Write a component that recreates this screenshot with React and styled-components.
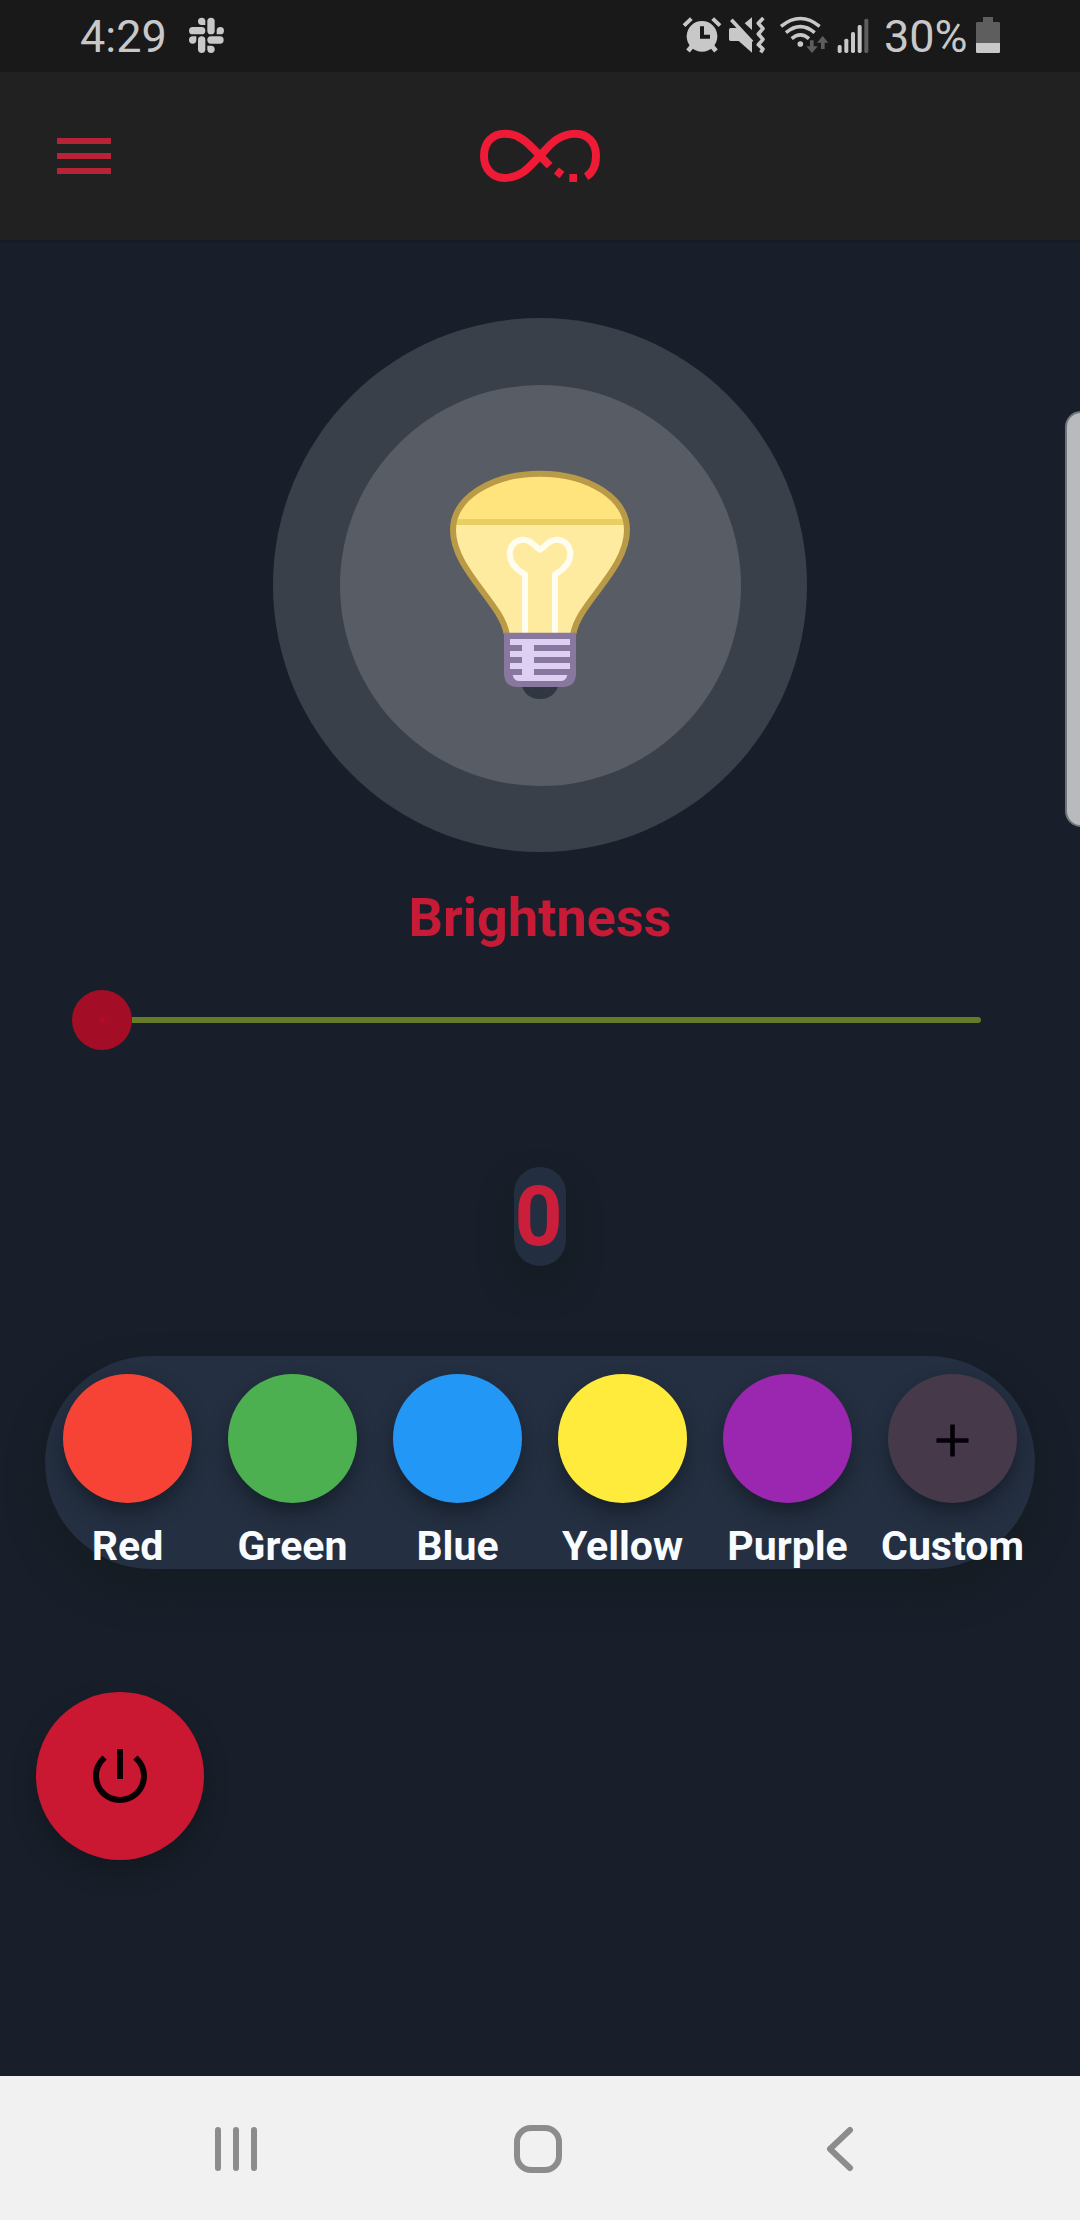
import React, { useState } from "react";
import styled, { createGlobalStyle } from "styled-components";

const GlobalStyle = createGlobalStyle`
  *, *::before, *::after { box-sizing: border-box; }
  body { margin: 0; background: #181f2a; }
`;

const Screen = styled.div`
  position: relative;
  display: flex;
  flex-direction: column;
  width: 1080px;
  height: 2220px;
  overflow: hidden;
  background: #181f2a;
  font-family: Roboto, "Liberation Sans", sans-serif;
`;

const StatusBar = styled.header`
  display: flex;
  justify-content: space-between;
  align-items: flex-start;
  height: 72px;
  padding: 16px 80px 0 80px;
  background: #191919;
`;

const StatusGroup = styled.div`
  display: flex;
  align-items: flex-start;
`;

const StatusText = styled.span`
  width: ${(p) => p.$width}px;
  margin: 0 ${(p) => p.$after}px 0 ${(p) => p.$before || 0}px;
  font-size: 45px;
  line-height: 42px;
  color: #c8c8c8;
  white-space: nowrap;
`;

const StatusIcon = styled.svg`
  display: block;
  width: ${(p) => p.$width}px;
  height: 38px;
  margin-right: ${(p) => p.$after || 0}px;
  fill: #c8c8c8;
  overflow: visible;
`;

const AppBar = styled.nav`
  z-index: 1;
  display: grid;
  grid-template-columns: 72px 1fr 72px;
  align-items: center;
  height: 168px;
  padding: 0 48px;
  background: #212121;
  box-shadow: 0 1px 3px rgba(0, 0, 0, 0.2);
`;

const IconButton = styled.button`
  display: flex;
  padding: 0;
  border: 0;
  background: none;
  color: #b92338;
`;

const MaterialIcon = styled.svg`
  display: block;
  width: ${(p) => p.$size}px;
  height: ${(p) => p.$size}px;
  fill: currentColor;
`;

const Logo = styled.svg`
  justify-self: center;
  display: block;
  width: 200px;
  height: 110px;
  margin-top: -2px;
`;

const Content = styled.main`
  flex: 1;
  display: flex;
  flex-direction: column;
  align-items: center;
  padding-top: 78px;
`;

const Halo = styled.div`
  display: flex;
  align-items: center;
  justify-content: center;
  width: 534px;
  height: 534px;
  border-radius: 50%;
  background: #3a4049;
`;

const HaloInner = styled.div`
  display: flex;
  align-items: center;
  justify-content: center;
  width: 401px;
  height: 401px;
  border-radius: 50%;
  background: #585c65;
`;

const BulbArt = styled.svg`
  display: block;
  width: 240px;
  height: 280px;
  margin-top: -10px;
`;

const Title = styled.h1`
  margin: 34px 0 0;
  font-size: 54px;
  line-height: 64px;
  font-weight: 700;
  color: #c71a36;
`;

const SliderRow = styled.div`
  align-self: stretch;
  display: flex;
  align-items: center;
  height: 60px;
  margin: 40px 99px 0 72px;
`;

const Thumb = styled.span`
  display: flex;
  align-items: center;
  justify-content: center;
  width: 60px;
  height: 60px;
  border-radius: 50%;
  background: #a30d25;

  &::after {
    content: "";
    width: 5px;
    height: 5px;
    border-radius: 50%;
    background: #b30d2c;
  }
`;

const Track = styled.span`
  flex: 1;
  height: 6px;
  border-radius: 0 3px 3px 0;
  background: #677a25;
`;

const Value = styled.output`
  width: 52px;
  height: 99px;
  margin-top: 117px;
  padding-right: 3px;
  border-radius: 26px;
  background: #232e40;
  box-shadow: 0 18px 30px 2px rgba(20, 28, 32, 0.8);
  font-size: 84px;
  line-height: 99px;
  font-weight: 700;
  text-align: center;
  color: #cb1e3a;
`;

const Palette = styled.section`
  display: grid;
  grid-template-columns: repeat(6, 165px);
  width: 990px;
  height: 213px;
  margin-top: 90px;
  padding-top: 18px;
  border-radius: 107px;
  background: #242f41;
  box-shadow: 0 20px 36px 0 #151c22;
`;

const Swatch = styled.div`
  display: flex;
  flex-direction: column;
  align-items: center;
`;

const SwatchButton = styled.button`
  display: flex;
  align-items: center;
  justify-content: center;
  width: 129px;
  height: 129px;
  padding: 3px 0 0;
  border: 0;
  border-radius: 50%;
  background: ${(p) => p.$color};
  color: #040008;
  box-shadow: 0 10px 20px -2px rgba(16, 24, 34, 0.75);
`;

const SwatchLabel = styled.span`
  margin-top: 19px;
  font-size: 41px;
  line-height: 49px;
  font-weight: 700;
  color: #f9fcff;
  white-space: nowrap;
`;

const PowerButton = styled.button`
  align-self: flex-start;
  display: flex;
  align-items: center;
  justify-content: center;
  width: 168px;
  height: 168px;
  margin: 123px 0 0 36px;
  padding: 0;
  border: 0;
  border-radius: 50%;
  background: #cb1832;
  color: #0a0003;
  box-shadow: 0 12px 22px rgba(18, 24, 30, 0.85);
`;

const EdgeHandle = styled.div`
  position: absolute;
  top: 411px;
  right: -3px;
  width: 18px;
  height: 416px;
  border: 2px solid #71757b;
  border-radius: 16px 0 0 16px;
  background: #b9babd;
`;

const SystemNav = styled.footer`
  display: grid;
  grid-template-columns: 42px 48px 28px;
  column-gap: 257px;
  align-items: center;
  height: 144px;
  padding: 1px 0 0 215px;
  background: #f1f1f1;
`;

const NavGlyph = styled.svg`
  display: block;
  width: ${(p) => p.$width}px;
  height: 48px;
  margin-left: ${(p) => p.$nudge || 0}px;
  fill: none;
  stroke: #8c8c8c;
  stroke-width: 6px;
  stroke-linecap: round;
  stroke-linejoin: round;
`;

function SlackIcon() {
  return (
    <StatusIcon $width={36} viewBox="564 48 108 114">
      <rect x="622" y="53" width="22" height="50" rx="11" />
      <rect x="567" y="81" width="49" height="22" rx="11" />
      <rect x="622" y="109" width="49" height="22" rx="11" />
      <rect x="594" y="109" width="22" height="50" rx="11" />
      <path d="M616 75h-11a11 11 0 1 1 11-11z" />
      <path d="M650 103V92a11 11 0 1 1 11 11z" />
      <path d="M589 109v11a11 11 0 1 1-11-11z" />
      <path d="M622 137h11a11 11 0 1 1-11 11z" />
    </StatusIcon>
  );
}

function AlarmIcon() {
  return (
    <StatusIcon $width={40} $after={6} viewBox="66 48 120 114">
      <circle cx="126" cy="109" r="46" />
      <path d="M72 77l22-21M180 77l-22-21" stroke="#c8c8c8" strokeWidth="12" fill="none" />
      <path d="M97 137l-13 16M155 137l13 16" stroke="#c8c8c8" strokeWidth="14" fill="none" />
      <path d="M126 79v31h24" stroke="#191919" strokeWidth="12" fill="none" />
    </StatusIcon>
  );
}

function MuteVibrateIcon() {
  return (
    <StatusIcon $width={38} $after={13} viewBox="204 48 114 114">
      <path d="M207 89q0-5 5-5h20l44 42v32l-40-35h-24q-5 0-5-5z" />
      <path d="M276 52v38l-22-20z" />
      <path d="M214 59l62 67" stroke="#c8c8c8" strokeWidth="11" fill="none" />
      <path
        d="M310 54L295 70l14 16-14 16 14 16-14 16 14 13-7 10"
        stroke="#c8c8c8"
        strokeWidth="11"
        strokeLinejoin="round"
        fill="none"
      />
    </StatusIcon>
  );
}

function WifiIcon() {
  return (
    <StatusIcon $width={50} $after={8} viewBox="357 48 150 114">
      <g fill="none" stroke="#c8c8c8" strokeWidth="10.5">
        <path d="M363 79Q421 32 479 79" />
        <path d="M378 98Q421 62 464 98" />
        <path d="M395 116Q421 93 447 116" />
      </g>
      <circle cx="421" cy="132" r="8.5" />
      <g fill="#5e5e5e">
        <path d="M450 121h11v18h12l-17 20-17-20h11z" />
        <path d="M483 147h11v-19h11l-17-20-17 20h12z" />
      </g>
    </StatusIcon>
  );
}

function SignalIcon() {
  return (
    <StatusIcon $width={32} viewBox="531 48 96 114">
      <rect x="533" y="135" width="12" height="24" rx="5" />
      <rect x="553" y="116" width="12" height="43" rx="5" />
      <rect x="573" y="96" width="12" height="63" rx="5" />
      <rect x="593" y="75" width="12" height="84" rx="5" />
      <rect x="613" y="56" width="12" height="103" rx="5" fill="#5e5e5e" />
    </StatusIcon>
  );
}

function BatteryIcon() {
  return (
    <StatusIcon $width={24} viewBox="948 48 72 114">
      <path d="M969 51h30v15h17q4 0 4 4v60h-72V70q0-4 4-4h17z" fill="#5e5e5e" />
      <path d="M948 129h72v26q0 4-4 4h-64q-4 0-4-4z" />
    </StatusIcon>
  );
}

function InfinityLogo() {
  return (
    <Logo viewBox="0 0 600 330" fill="none" stroke="#ee1a36" strokeWidth="24">
      <path d="M438 230C458 218 468 196 468 167C468 128 443 101 406 101C349 101 322 146 300 167C274 193 248 234 194 234C157 234 132 207 132 167C132 128 157 101 194 101C248 101 276 145 300 167L329 197" />
      <path d="M349 212L366 225" />
      <path d="M388 234L411 234" />
    </Logo>
  );
}

function Bulb() {
  return (
    <BulbArt viewBox="0 0 720 840">
      <path d="M304 735h112q-14 42-56 42t-56-42z" fill="#303642" />
      <path
        d="M260 582C246 490 99 390 99 270C99 176 212 101 360 101S621 176 621 270C621 390 474 490 460 582z"
        fill="#ffeb9f"
      />
      <path d="M101 246C113 164 222 101 360 101S607 164 619 246z" fill="#ffe37d" />
      <path d="M101 246h518" stroke="#e9cf62" strokeWidth="18" />
      <path
        d="M260 582C246 490 99 390 99 270C99 176 212 101 360 101S621 176 621 270C621 390 474 490 460 582"
        fill="none"
        stroke="#b99a47"
        strokeWidth="18"
      />
      <path
        d="M315 580V403C290 389 269 370 269 343C269 318 286 299 310 299C336 299 342 319 360 329C378 319 384 299 410 299C434 299 451 318 451 343C451 370 430 389 405 403V580"
        fill="none"
        stroke="#fffdf0"
        strokeWidth="18"
        strokeLinejoin="round"
      />
      <path d="M252 578h216v122q0 41-41 41H293q-41 0-41-41z" fill="#88779e" />
      <g fill="#ded0f2">
        <rect x="270" y="597" width="180" height="18" />
        <rect x="270" y="633" width="180" height="18" />
        <rect x="270" y="669" width="180" height="18" />
        <path d="M278 705h164q-4 18-20 18H298q-16 0-20-18z" />
        <rect x="306" y="597" width="36" height="126" />
      </g>
    </BulbArt>
  );
}

const COLORS = [
  { name: "Red", color: "#f64336" },
  { name: "Green", color: "#4db050" },
  { name: "Blue", color: "#2397f5" },
  { name: "Yellow", color: "#ffeb3b" },
  { name: "Purple", color: "#9b27b0" },
  { name: "Custom", color: "#463a4a", add: true },
];

export default function App() {
  const [brightness] = useState(0);

  return (
    <>
      <GlobalStyle />
      <Screen>
        <StatusBar>
          <StatusGroup>
            <StatusText $width={87} $after={21}>4:29</StatusText>
            <SlackIcon />
          </StatusGroup>
          <StatusGroup>
            <AlarmIcon />
            <MuteVibrateIcon />
            <WifiIcon />
            <SignalIcon />
            <StatusText $width={84} $before={15} $after={8}>30%</StatusText>
            <BatteryIcon />
          </StatusGroup>
        </StatusBar>

        <AppBar>
          <IconButton aria-label="Menu">
            <MaterialIcon $size={72} viewBox="0 0 24 24">
              <path d="M3 18h18v-2H3v2zm0-5h18v-2H3v2zm0-7v2h18V6H3z" />
            </MaterialIcon>
          </IconButton>
          <InfinityLogo />
        </AppBar>

        <Content>
          <Halo>
            <HaloInner>
              <Bulb />
            </HaloInner>
          </Halo>

          <Title>Brightness</Title>

          <SliderRow>
            <Thumb />
            <Track />
          </SliderRow>

          <Value>{brightness}</Value>

          <Palette>
            {COLORS.map(({ name, color, add }) => (
              <Swatch key={name}>
                <SwatchButton $color={color} aria-label={name}>
                  {add && (
                    <MaterialIcon $size={55} viewBox="0 0 24 24">
                      <path d="M19 13h-6v6h-2v-6H5v-2h6V5h2v6h6v2z" />
                    </MaterialIcon>
                  )}
                </SwatchButton>
                <SwatchLabel>{name}</SwatchLabel>
              </Swatch>
            ))}
          </Palette>

          <PowerButton aria-label="Power">
            <MaterialIcon $size={72} viewBox="0 0 24 24">
              <path d="M13 3h-2v10h2V3zm4.83 2.17l-1.42 1.42C17.99 7.86 19 9.81 19 12c0 3.87-3.13 7-7 7s-7-3.13-7-7c0-2.19 1.01-4.14 2.58-5.42L6.17 5.17C4.23 6.82 3 9.26 3 12c0 4.97 4.03 9 9 9s9-4.03 9-9c0-2.74-1.23-5.18-3.17-6.83z" />
            </MaterialIcon>
          </PowerButton>
        </Content>

        <SystemNav>
          <NavGlyph $width={42} viewBox="0 0 42 48">
            <path d="M3 5v38M21 5v38M39 5v38" />
          </NavGlyph>
          <NavGlyph $width={48} viewBox="0 0 48 48">
            <rect x="3" y="3" width="42" height="42" rx="14" />
          </NavGlyph>
          <NavGlyph $width={28} $nudge={7} viewBox="0 0 28 48">
            <path d="M24 5L4 24l20 19" />
          </NavGlyph>
        </SystemNav>

        <EdgeHandle />
      </Screen>
    </>
  );
}
